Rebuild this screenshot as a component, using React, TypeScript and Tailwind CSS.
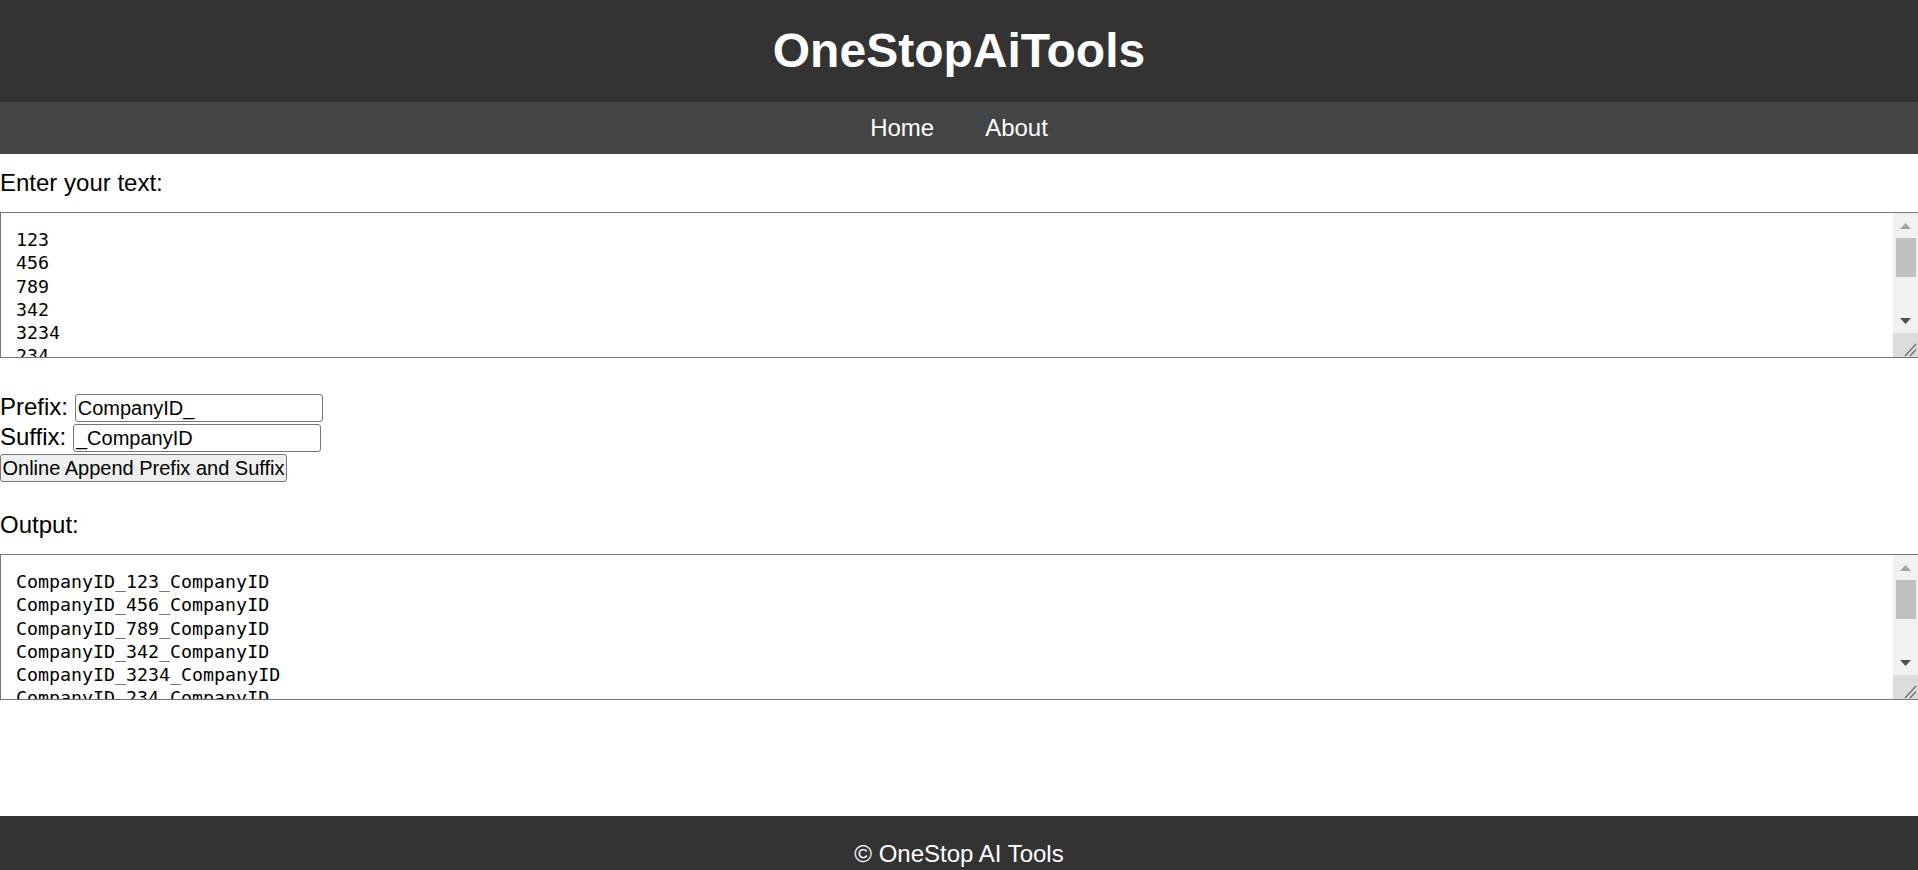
import React from "react";

const inputLines = ["123", "456", "789", "342", "3234", "234", "567"];
const outputLines = inputLines.map((l) => `CompanyID_${l}_CompanyID`);

function Scrollbar() {
  return (
    <div className="flex w-[25px] shrink-0 flex-col bg-[#f1f1f1]">
      <div className="flex h-[25px] items-center justify-center">
        <svg width="11" height="6" viewBox="0 0 11 6">
          <polygon points="0,6 11,6 5.5,0" fill="#a3a3a3" />
        </svg>
      </div>
      <div className="flex-1">
        <div className="mx-auto h-[39px] w-[20px] bg-[#c1c1c1]" />
      </div>
      <div className="flex h-[25px] items-center justify-center">
        <svg width="11" height="6" viewBox="0 0 11 6">
          <polygon points="0,0 11,0 5.5,6" fill="#505050" />
        </svg>
      </div>
      <div className="h-[24px] bg-[#dcdcdc]">
        <svg width="25" height="24" viewBox="0 0 25 24">
          <line x1="12" y1="23" x2="23" y2="11" stroke="#6a6a6a" strokeWidth="1.2" />
          <line x1="17" y1="23" x2="23" y2="16.5" stroke="#6a6a6a" strokeWidth="1.2" />
        </svg>
      </div>
    </div>
  );
}

function FakeTextarea({ lines }: { lines: string[] }) {
  return (
    <div className="flex h-[146px] w-full border-y border-l border-[#767676] bg-white">
      <div className="min-w-0 flex-1 overflow-hidden pl-[15px] pt-[15px] font-['DejaVu_Sans_Mono',monospace] text-[18.3px] leading-[23.3px] text-black">
        {lines.map((l, i) => (
          <div key={i} className="whitespace-pre">
            {l}
          </div>
        ))}
      </div>
      <Scrollbar />
    </div>
  );
}

export default function App() {
  return (
    <div className="min-h-screen bg-white font-['Liberation_Sans',Arial,sans-serif] text-black">
      <header className="flex h-[102px] items-center justify-center bg-[#333333] pb-[2px]">
        <h1 className="text-[48px] font-bold leading-[55px] text-white">OneStopAiTools</h1>
      </header>
      <nav className="flex h-[52px] items-center justify-center gap-[51px] bg-[#444444] pb-[2px]">
        <a className="text-[24px] leading-[27px] text-white">Home</a>
        <a className="text-[24px] leading-[27px] text-white">About</a>
      </nav>
      <main>
        <div className="mt-[15px] mb-[16px] text-[24px] leading-[27px]">Enter your text:</div>
        <FakeTextarea lines={inputLines} />
        <div className="mt-[35px] flex h-[30px] items-start">
          <span className="whitespace-pre text-[24px] leading-[27px]">Prefix: </span>
          <div className="mt-[1px] flex h-[28px] w-[248px] items-center rounded-[3px] border border-[#767676] px-[2px] text-[20px] leading-[23px]">
            CompanyID_
          </div>
        </div>
        <div className="flex h-[30px] items-start">
          <span className="whitespace-pre text-[24px] leading-[27px]">Suffix: </span>
          <div className="mt-[1px] flex h-[28px] w-[248px] items-center rounded-[3px] border border-[#767676] px-[2px] text-[20px] leading-[23px]">
            _CompanyID
          </div>
        </div>
        <div className="flex h-[30px] items-start">
          <button className="mt-[1px] flex h-[28px] w-[287px] items-center justify-center rounded-[3px] border border-[#767676] bg-[#efefef] px-0 text-[20px] leading-[23px] text-black">
            Online Append Prefix and Suffix
          </button>
        </div>
        <div className="mt-[28px] mb-[16px] text-[24px] leading-[27px]">Output:</div>
        <FakeTextarea lines={outputLines} />
      </main>
      <footer className="mt-[116px] bg-[#333333] py-[24px] text-center text-[24px] leading-[27px] text-white">
        © OneStop AI Tools
      </footer>
    </div>
  );
}
